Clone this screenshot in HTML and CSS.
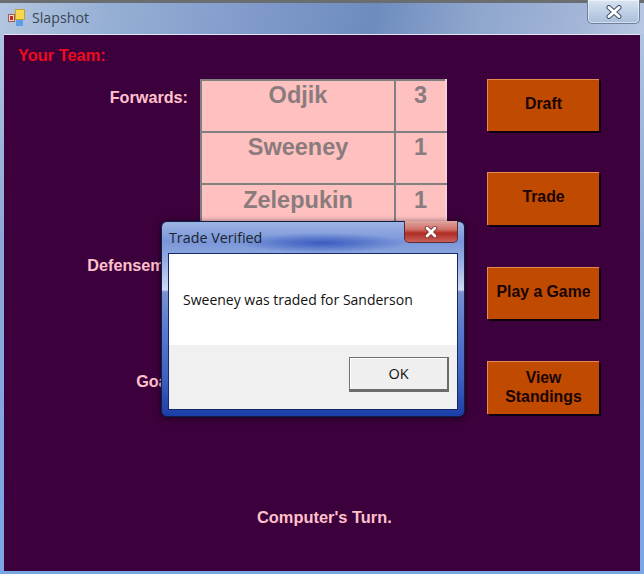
FILE: index.html
```html
<!DOCTYPE html>
<html lang="en">
<head>
    <meta charset="UTF-8" />
    <title>Slapshot</title>
    <link rel="stylesheet" href="styles.css">
</head>
<body>

<div class="window">
    <div class="titlebar">
        <svg class="app-icon" width="18" height="18" viewBox="0 0 18 18">
            <rect x="0.5" y="5.5" width="6" height="7" fill="#f0dcd0" stroke="#a8584c"/>
            <rect x="2" y="7" width="3" height="4" fill="#c8281e"/>
            <rect x="8" y="11" width="7" height="6" fill="#5c9ee8"/>
            <rect x="7.5" y="0.5" width="9" height="10" fill="#f6d84a" stroke="#c0a438"/>
        </svg>
        <span class="app-title">Slapshot</span>
        <div class="close-btn">
            <svg width="18" height="14" viewBox="0 0 18 14">
                <path d="M4 2.5 L14 11.5 M14 2.5 L4 11.5" stroke="#46566e" stroke-width="5" stroke-linecap="round"/>
                <path d="M4 2.5 L14 11.5 M14 2.5 L4 11.5" stroke="#fff" stroke-width="3" stroke-linecap="round"/>
            </svg>
        </div>
    </div>

    <div class="client">
        <div class="your-team">Your Team:</div>

        <div class="board">
            <div class="labels">
                <div class="pos-label forwards">Forwards:</div>
                <div class="pos-label defense">Defensemen:</div>
                <div class="pos-label goalies">Goalie:</div>
            </div>

            <table class="roster">
                <tr><td class="name">Odjik</td><td class="num">3</td></tr>
                <tr><td class="name">Sweeney</td><td class="num">1</td></tr>
                <tr><td class="name">Zelepukin</td><td class="num">1</td></tr>
            </table>

            <div class="actions">
                <button class="action">Draft</button>
                <button class="action">Trade</button>
                <button class="action">Play a Game</button>
                <button class="action">View<br>Standings</button>
            </div>
        </div>

        <div class="status">Computer's Turn.</div>
    </div>
</div>

<!-- message box over the form -->
<div class="dialog">
    <div class="dialog-title">
        <span>Trade Verified</span>
        <div class="dialog-close">
            <svg width="16" height="12" viewBox="0 0 16 12">
                <path d="M4 2 L12 10 M12 2 L4 10" stroke="#7a2a2a" stroke-width="4.4" stroke-linecap="round"/>
                <path d="M4 2 L12 10 M12 2 L4 10" stroke="#fff" stroke-width="2.8" stroke-linecap="round"/>
            </svg>
        </div>
    </div>
    <div class="dialog-inner">
        <div class="dialog-msg">Sweeney was traded for Sanderson</div>
        <div class="dialog-foot">
            <button class="ok-btn">OK</button>
        </div>
    </div>
</div>

</body>
</html>
```

FILE: styles.css
```css
html, body {
    margin: 0;
    padding: 0;
}
body {
    width: 644px;
    height: 574px;
    overflow: hidden;
    position: relative;
    font-family: "Liberation Sans", Arial, sans-serif;
    background: #8fb0dc;
}
.window {
    height: 574px;
    box-sizing: border-box;
    border-top: 3px solid #6a6e70;
    background: linear-gradient(to bottom, #b4c8e2 0%, #8ca8d4 40%, #7aa6e6 100%);
    padding: 0 4px 3px 4px;
    display: flex;
    flex-direction: column;
}
.titlebar {
    height: 31px;
    flex: none;
    margin: 0 -4px;
    padding-left: 8px;
    display: flex;
    align-items: center;
    background: linear-gradient(100deg, #b4c6e0 0%, #94aed4 18%, #7f9aca 40%, #6d8cbe 58%, #8ca4cc 72%, #a4b6d8 90%, #b8c8e2 100%);
    position: relative;
}
.app-icon {
    flex: none;
    margin-right: 6px;
    margin-top: -1px;
}
.app-title {
    font-family: "Open Sans", sans-serif;
    font-size: 14.2px;
    color: #3a4452;
    margin-top: -2px;
}
.close-btn {
    position: absolute;
    left: 587px;
    top: -3px;
    width: 53px;
    height: 24px;
    box-sizing: border-box;
    border: 1px solid #6d7f9c;
    border-top: none;
    border-radius: 0 0 5px 5px;
    background: linear-gradient(to bottom, #dbe5f2, #c0d0e6 50%, #a9bdda);
    display: flex;
    align-items: center;
    justify-content: center;
    box-shadow: inset 0 0 0 1px rgba(255,255,255,0.5);
}
.client {
    flex: 1;
    background: #3c003c;
    border-top: 1px solid #dfe8f4;
    position: relative;
    padding: 10px 0 0 14px;
}
.your-team {
    color: #ee0b20;
    font-weight: bold;
    font-size: 16.4px;
    line-height: 20px;
}
.board {
    display: flex;
    margin-top: 14px;
}
.labels {
    width: 170px;
    flex: none;
    margin-right: 12px;
    display: flex;
    flex-direction: column;
    align-items: flex-end;
}
.pos-label {
    color: #ffc0cb;
    font-weight: bold;
    font-size: 16.2px;
    line-height: 20px;
}
.forwards {
    margin-top: 8px;
}
.defense {
    margin-top: 148px;
    margin-right: -1px;
}
.goalies {
    margin-top: 96px;
    margin-right: -3px;
}
.roster {
    border-collapse: collapse;
    width: 247px;
    flex: none;
    align-self: flex-start;
    background: #ffc0c0;
    table-layout: fixed;
}
.roster td {
    box-sizing: border-box;
    border: 2px solid #808080;
    height: 52px;
    padding: 1px 0 0 0;
    vertical-align: top;
    text-align: center;
    color: #8a7c7c;
    font-weight: bold;
    font-size: 23.5px;
    line-height: 27px;
}
.roster tr:last-child td {
    padding-top: 2px;
}
.roster .num {
    width: 51px;
    border-right-color: #f8d0d4;
}
.actions {
    margin-left: 40px;
    display: flex;
    flex-direction: column;
}
.action {
    width: 112px;
    height: 52px;
    margin-bottom: 42px;
    padding: 0 0 5px 0;
    background: #c04a00;
    border: none;
    border-top: 1px solid #e88a50;
    border-left: 1px solid #e88a50;
    box-shadow: 2px 2px 0 #0f0010;
    font-family: "Liberation Sans", Arial, sans-serif;
    font-weight: bold;
    font-size: 15.8px;
    line-height: 19px;
    color: #180404;
}
.action:first-child {
    margin-bottom: 41px;
}
.action:nth-child(even) {
    height: 53px;
}
.action:last-child {
    padding-bottom: 2px;
}
.status {
    position: absolute;
    left: 253px;
    top: 472px;
    color: #ffc0cb;
    font-weight: bold;
    font-size: 16.4px;
    line-height: 20px;
}
.dialog {
    position: absolute;
    left: 161px;
    top: 221px;
    width: 304px;
    height: 196px;
    box-sizing: border-box;
    border-radius: 6px;
    border: 1px solid #10204a;
    background: linear-gradient(to bottom, #9db4e4 0%, #7a96d8 10%, #8fa8e0 18%, #d0daf0 35%, #7a92cc 36%, #5a7ad0 55%, #3f62c0 80%, #1c3ea8 100%);
    padding: 0 6px 6px 6px;
    display: flex;
    flex-direction: column;
    box-shadow: 0 1px 6px rgba(0,0,0,0.6);
}
.dialog-title {
    height: 31px;
    flex: none;
    display: flex;
    align-items: center;
    margin: 0 -6px;
    padding-left: 7px;
    position: relative;
    font-family: "Open Sans", sans-serif;
    font-size: 14.3px;
    color: #1c2430;
    background: radial-gradient(ellipse 85px 10px at 160px 21px, #3a5cc0 0%, rgba(58,92,192,0) 100%);
}
.dialog-close {
    position: absolute;
    left: 242px;
    top: -1px;
    width: 54px;
    height: 22px;
    box-sizing: border-box;
    border: 1px solid #5a2a3a;
    border-top: none;
    border-radius: 0 0 5px 5px;
    background: linear-gradient(to bottom, #e0a8a0 0%, #d07068 40%, #b02c24 58%, #c86058 100%);
    display: flex;
    align-items: center;
    justify-content: center;
}
.dialog-inner {
    flex: 1;
    border: 1px solid #12286a;
    background: #f0f0f0;
    display: flex;
    flex-direction: column;
}
.dialog-msg {
    height: 91px;
    flex: none;
    box-sizing: border-box;
    background: #fff;
    padding: 36px 0 0 14px;
    font-family: "Open Sans", sans-serif;
    font-size: 14px;
    line-height: 20px;
    color: #111;
}
.dialog-foot {
    flex: 1;
    display: flex;
    justify-content: flex-end;
    padding: 12px 8px 0 0;
}
.ok-btn {
    width: 100px;
    height: 35px;
    padding: 0;
    box-sizing: border-box;
    background: #efefef;
    border: 1px solid #707070;
    border-right: 2px solid #6c6c6c;
    border-bottom: 3px solid #6c6c6c;
    box-shadow: inset 1px 1px 0 #fff;
    font-family: "Open Sans", sans-serif;
    font-size: 14.5px;
    color: #111;
}
```
